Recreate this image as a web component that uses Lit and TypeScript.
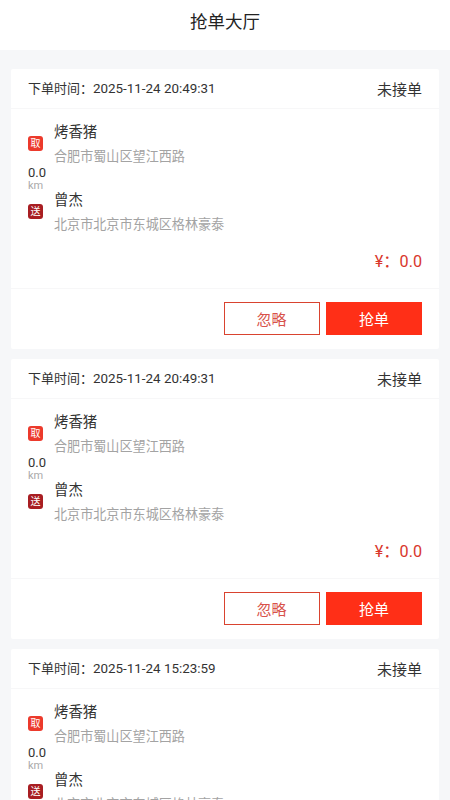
import { LitElement, html, css } from "lit";
import { customElement } from "lit/decorators.js";

const orders = [
  { time: "2025-11-24 20:49:31" },
  { time: "2025-11-24 20:49:31" },
  { time: "2025-11-24 15:23:59" },
];

@customElement("app-root")
export class AppRoot extends LitElement {
  static styles = css`
    :host {
      display: block;
      width: 450px;
      height: 800px;
      overflow: hidden;
      background: #f6f7f9;
      font-family: Roboto, "Noto Sans CJK SC", sans-serif;
      color: #333;
    }
    .header {
      height: 50px;
      background: #fff;
      display: flex;
      align-items: center;
      justify-content: center;
      padding-bottom: 9px;
      box-sizing: border-box;
      font-size: 17.5px;
      color: #222;
    }
    .list {
      display: flex;
      flex-direction: column;
      gap: 10px;
      padding: 19px 11px 0;
    }
    .card {
      background: #fff;
      height: 280px;
      flex: none;
      border-radius: 2px;
      display: flex;
      flex-direction: column;
    }
    .top {
      height: 40px;
      box-sizing: border-box;
      border-bottom: 1px solid #f7f7f8;
      display: flex;
      align-items: center;
      justify-content: space-between;
      padding: 0 17px;
    }
    .time {
      font-size: 13px;
      color: #333;
      padding-bottom: 3px;
    }
    .date {
      font-size: 13.4px;
    }
    .status {
      font-size: 15px;
      color: #333;
    }
    .body {
      height: 180px;
      box-sizing: border-box;
      border-bottom: 1px solid #f7f7f8;
      padding: 14px 17px 0;
      position: relative;
    }
    .route {
      display: grid;
      grid-template-columns: 26px 1fr;
      grid-template-rows: 68px 68px;
    }
    .marks {
      grid-row: 1 / 3;
      display: flex;
      flex-direction: column;
      align-items: flex-start;
      padding-top: 13px;
    }
    .tag {
      width: 15px;
      height: 15px;
      border-radius: 3px;
      color: #fff;
      font-size: 10px;
      line-height: 15px;
      text-align: center;
      flex: none;
    }
    .pick { background: #ec3a2c; }
    .drop { background: #a81e22; }
    .dist {
      font-size: 13px;
      color: #333;
      line-height: 15px;
      margin-top: 14px;
    }
    .km {
      font-size: 11px;
      color: #aaa;
      line-height: 13px;
      margin-bottom: 12px;
      margin-top: -1px;
    }
    .name {
      font-size: 14.4px;
      color: #333;
      line-height: 20px;
    }
    .addr {
      font-size: 13.1px;
      color: #a3a3a3;
      line-height: 18px;
      margin-top: 5px;
    }
    .price {
      position: absolute;
      right: 17px;
      top: 142px;
      font-size: 16.2px;
      color: #d9372c;
      line-height: 22px;
    }
    .footer {
      display: flex;
      justify-content: flex-end;
      gap: 6px;
      padding: 13px 17px 0;
    }
    .btn {
      width: 96px;
      height: 33px;
      box-sizing: border-box;
      display: flex;
      align-items: center;
      justify-content: center;
      font-size: 15px;
    }
    .ghost {
      border: 1.5px solid #d9432f;
      color: #d8524a;
      background: #fff;
      padding-right: 1px;
    }
    .solid {
      background: #ff2f17;
      color: #fff;
    }
  `;

  render() {
    return html`
      <div class="header">抢单大厅</div>
      <div class="list">
        ${orders.map(
          (o) => html`
            <div class="card">
              <div class="top">
                <span class="time">下单时间：<span class="date">${o.time}</span></span>
                <span class="status">未接单</span>
              </div>
              <div class="body">
                <div class="route">
                  <div class="marks">
                    <span class="tag pick">取</span>
                    <span class="dist">0.0</span>
                    <span class="km">km</span>
                    <span class="tag drop">送</span>
                  </div>
                  <div>
                    <div class="name">烤香猪</div>
                    <div class="addr">合肥市蜀山区望江西路</div>
                  </div>
                  <div>
                    <div class="name">曾杰</div>
                    <div class="addr">北京市北京市东城区格林豪泰</div>
                  </div>
                </div>
                <div class="price">¥：0.0</div>
              </div>
              <div class="footer">
                <div class="btn ghost">忽略</div>
                <div class="btn solid">抢单</div>
              </div>
            </div>
          `
        )}
      </div>
    `;
  }
}
